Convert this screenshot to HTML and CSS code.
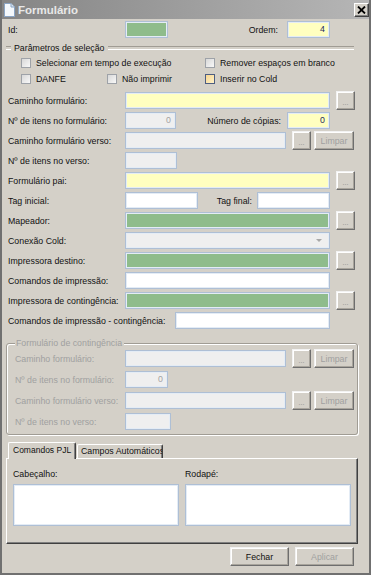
FILE: index.html
```html
<!DOCTYPE html>
<html lang="pt">
<head>
    <meta charset="UTF-8">
    <meta name="viewport" content="width=device-width, initial-scale=1.0">
    <title>Formulário</title>
    <link rel="stylesheet" href="styles.css">
</head>
<body>
    <div class="window">
        <div class="titlebar">
            <svg class="app-icon" width="11" height="14" viewBox="0 0 11 14">
                <path d="M0.5 0.5 H7 L10.5 4 V13.5 H0.5 Z" fill="#f4f8fc" stroke="#8aa4c4"/>
                <path d="M7 0.5 V4 H10.5" fill="#d8e4f0" stroke="#8aa4c4"/>
            </svg>
            <span class="title">Formulário</span>
            <button class="close">
                <svg width="9" height="8" viewBox="0 0 9 8">
                    <path d="M1 0.5 L8 7.5 M8 0.5 L1 7.5" stroke="#000" stroke-width="1.8"/>
                </svg>
            </button>
        </div>

        <div class="content">
            <div class="row id-row">
                <label class="lbl">Id:</label>
                <div class="f g w43"></div>
                <label class="lbl-ordem">Ordem:</label>
                <div class="f y w43 num">4</div>
            </div>

            <div class="legend-line"><span>Parâmetros de seleção</span></div>
            <div class="checks">
                <label class="chk span2"><span class="box"></span>Selecionar em tempo de execução</label>
                <label class="chk"><span class="box"></span>Remover espaços em branco</label>
                <label class="chk"><span class="box"></span>DANFE</label>
                <label class="chk"><span class="box"></span>Não imprimir</label>
                <label class="chk"><span class="box hot"></span>Inserir no Cold</label>
            </div>

            <div class="rows">
                <div class="row">
                    <label class="lbl">Caminho formulário:</label>
                    <div class="f y wide"></div>
                    <button class="btn dots">...</button>
                </div>
                <div class="row">
                    <label class="lbl">Nº de itens no formulário:</label>
                    <div class="f d w51 num">0</div>
                    <label class="lbl-right copias">Número de cópias:</label>
                    <div class="f y w43 num">0</div>
                </div>
                <div class="row">
                    <label class="lbl">Caminho formulário verso:</label>
                    <div class="f d mid"></div>
                    <button class="btn dots">...</button>
                    <button class="btn limpar">Limpar</button>
                </div>
                <div class="row">
                    <label class="lbl">Nº de itens no verso:</label>
                    <div class="f d w52"></div>
                </div>
                <div class="row">
                    <label class="lbl">Formulário pai:</label>
                    <div class="f y wide"></div>
                    <button class="btn dots">...</button>
                </div>
                <div class="row">
                    <label class="lbl">Tag inicial:</label>
                    <div class="f tag"></div>
                    <label class="lbl-right tagfinal">Tag final:</label>
                    <div class="f tag"></div>
                </div>
                <div class="row">
                    <label class="lbl">Mapeador:</label>
                    <div class="f g wide"></div>
                    <button class="btn dots">...</button>
                </div>
                <div class="row">
                    <label class="lbl">Conexão Cold:</label>
                    <div class="f d wide select"><span class="arrow"></span></div>
                </div>
                <div class="row">
                    <label class="lbl">Impressora destino:</label>
                    <div class="f g wide"></div>
                    <button class="btn dots">...</button>
                </div>
                <div class="row">
                    <label class="lbl">Comandos de impressão:</label>
                    <div class="f wide"></div>
                </div>
                <div class="row">
                    <label class="lbl">Impressora de contingência:</label>
                    <div class="f g wide"></div>
                    <button class="btn dots">...</button>
                </div>
                <div class="row">
                    <label class="lbl long">Comandos de impressão - contingência:</label>
                    <div class="f w155"></div>
                </div>
            </div>

            <fieldset class="group">
                <legend>Formulário de contingência</legend>
                <div class="row">
                    <label class="lbl">Caminho formulário:</label>
                    <div class="f d mid"></div>
                    <button class="btn dots">...</button>
                    <button class="btn limpar">Limpar</button>
                </div>
                <div class="row">
                    <label class="lbl">Nº de itens no formulário:</label>
                    <div class="f d w43 num">0</div>
                </div>
                <div class="row">
                    <label class="lbl">Caminho formulário verso:</label>
                    <div class="f d mid"></div>
                    <button class="btn dots">...</button>
                    <button class="btn limpar">Limpar</button>
                </div>
                <div class="row">
                    <label class="lbl">Nº de itens no verso:</label>
                    <div class="f d w46"></div>
                </div>
            </fieldset>

            <div class="tabs">
                <div class="tab active">Comandos PJL</div>
                <div class="tab">Campos Automáticos</div>
            </div>
            <div class="panel">
                <div class="col">
                    <label>Cabeçalho:</label>
                    <div class="f area"></div>
                </div>
                <div class="col">
                    <label>Rodapé:</label>
                    <div class="f area"></div>
                </div>
            </div>

            <div class="footer">
                <button class="btn action">Fechar</button>
                <button class="btn action off">Aplicar</button>
            </div>
        </div>
    </div>
</body>
</html>
```

FILE: styles.css
```css
* {
    margin: 0;
    padding: 0;
    box-sizing: border-box;
}
body, html {
    width: 371px;
    height: 575px;
    overflow: hidden;
    font-family: "Liberation Sans", Arial, sans-serif;
    font-size: 8.8px;
    color: #111;
    background-color: #d4d0c8;
}
.window {
    width: 371px;
    height: 575px;
    background-color: #d4d0c8;
    border: 2px solid #707070;
    border-top: none;
}
.titlebar {
    height: 19px;
    display: flex;
    align-items: center;
    padding-left: 2px;
    background: linear-gradient(to right, #858585, #b6b6b6);
    color: #e8e8e8;
}
.app-icon {
    margin-right: 3px;
}
.title {
    font-weight: bold;
    font-size: 11.5px;
}
.close {
    margin-left: auto;
    margin-right: 0;
    width: 15px;
    height: 14px;
    display: flex;
    align-items: center;
    justify-content: center;
    background-color: #d4d0c8;
    border: 1px solid;
    border-color: #fff #404040 #404040 #fff;
    box-shadow: inset -1px -1px #808080;
}
.content {
    padding: 0 6px;
}
.row {
    display: flex;
    align-items: center;
    height: 17px;
    margin-bottom: 3px;
}
.id-row {
    margin-top: 2px;
    margin-bottom: 0;
}
.lbl {
    width: 117px;
    flex: none;
    white-space: nowrap;
}
.lbl.long {
    width: 167px;
}
.lbl-ordem {
    width: 110px;
    margin-right: 9px;
    text-align: right;
}
.lbl-right {
    text-align: right;
    white-space: nowrap;
}
.copias {
    width: 105px;
    margin-right: 6px;
}
.tagfinal {
    width: 54px;
    margin-right: 5px;
}

/* campos */
.f {
    height: 17px;
    flex: none;
    background-color: #fff;
    border: 1px solid #aebfd5;
    box-shadow: inset 0 0 0 1px #e4ecf5;
    line-height: 15px;
}
.f.y {
    background-color: #ffffc0;
    color: #1d2a5c;
}
.f.g {
    background-color: #8fbc8b;
}
.f.d {
    background-color: #efefef;
    color: #a3a3a3;
}
.num {
    text-align: right;
    padding-right: 4px;
}
.w43 { width: 43px; }
.w46 { width: 46px; }
.w51 { width: 51px; }
.w52 { width: 52px; }
.w155 { width: 155px; }
.tag { width: 73px; }
.mid { width: 161px; }
.wide { width: 205px; }
.select {
    display: flex;
    align-items: center;
    justify-content: flex-end;
    padding-right: 7px;
}
.arrow {
    width: 0;
    height: 0;
    border-left: 3px solid transparent;
    border-right: 3px solid transparent;
    border-top: 3px solid #a8a8a8;
}

/* botoes */
.btn {
    flex: none;
    height: 19px;
    font-family: inherit;
    font-size: 8.8px;
    color: #111;
    background-color: #d4d0c8;
    border: 1px solid;
    border-color: #f2f2f2 #6e6e6e #6e6e6e #f2f2f2;
    box-shadow: inset -1px -1px #a8a49c, inset 1px 1px #fff;
}
.dots {
    width: 19px;
    margin-left: 6px;
    color: #8a8a8a;
    font-size: 7px;
    padding-top: 3px;
}
.limpar {
    width: 40px;
    margin-left: 3px;
    color: #a0a0a0;
}

/* parametros */
.legend-line {
    display: flex;
    align-items: center;
    height: 14px;
    margin-top: 3px;
    margin-left: -2px;
    margin-right: 9px;
}
.legend-line::before,
.legend-line::after {
    content: "";
    height: 2px;
    border-top: 1px solid #a09c94;
    border-bottom: 1px solid #fff;
}
.legend-line::before {
    width: 5px;
    margin-right: 3px;
}
.legend-line::after {
    flex: 1;
    margin-left: 4px;
}
.checks {
    display: grid;
    grid-template-columns: 86px 98px auto;
    grid-auto-rows: 16px;
    margin-left: 13px;
}
.span2 {
    grid-column: span 2;
}
.chk {
    display: flex;
    align-items: center;
    gap: 5px;
    white-space: nowrap;
}
.box {
    width: 10px;
    height: 10px;
    border: 1px solid #9ea2a8;
    background: linear-gradient(135deg, #d8d8d8, #f8f8f8);
}
.box.hot {
    border-color: #4d5d80;
    background: linear-gradient(135deg, #f8d690, #fff2c8);
}
.rows {
    margin-top: 5px;
}

/* formulario de contingencia */
.group {
    margin: 8px 5px 0 -2px;
    padding: 0 0 0 8px;
    border: 1px solid #a09c94;
    border-radius: 3px;
    box-shadow: 1px 1px 0 #fff, inset 1px 1px 0 #fff;
}
.group legend {
    padding: 0 2px 0 1px;
    height: 12px;
    line-height: 12px;
    color: #a0a0a0;
    background-color: #d4d0c8;
}
.group .row {
    margin-bottom: 4px;
}
.group .row:first-of-type {
    margin-top: 1px;
}
.group .lbl {
    width: 110px;
    color: #a0a0a0;
}

/* abas */
.tabs {
    display: flex;
    align-items: flex-end;
    height: 16px;
    margin-top: 7px;
    margin-left: 0;
}
.tab {
    height: 14px;
    padding: 0 3px;
    line-height: 13px;
    border: 1px solid;
    border-bottom: none;
    border-color: #fff #404040 #fff #fff;
    box-shadow: inset -1px 0 #808080;
    border-radius: 2px 2px 0 0;
    white-space: nowrap;
    overflow: hidden;
}
.tab:nth-child(2) {
    width: 86px;
    margin-left: 1px;
}
.tab.active {
    width: 68px;
    height: 17px;
    padding: 0 0 0 4px;
    line-height: 14px;
    font-size: 8.5px;
    position: relative;
    margin-bottom: -1px;
    background-color: #d4d0c8;
    z-index: 1;
}
.panel {
    display: flex;
    gap: 6px;
    width: 352px;
    height: 86px;
    margin-left: -2px;
    padding: 9px 6px 0;
    border: 1px solid;
    border-color: #fff #404040 #404040 #fff;
    box-shadow: inset -1px -1px #808080;
}
.col label {
    display: block;
    height: 12px;
    line-height: 12px;
    margin-bottom: 4px;
}
.area {
    width: 166px;
    height: 42px;
}

/* rodape */
.footer {
    display: flex;
    justify-content: flex-end;
    gap: 6px;
    margin-top: 3px;
    margin-right: 9px;
}
.action {
    width: 59px;
    height: 19px;
}
.off {
    color: #a0a0a0;
}
```
